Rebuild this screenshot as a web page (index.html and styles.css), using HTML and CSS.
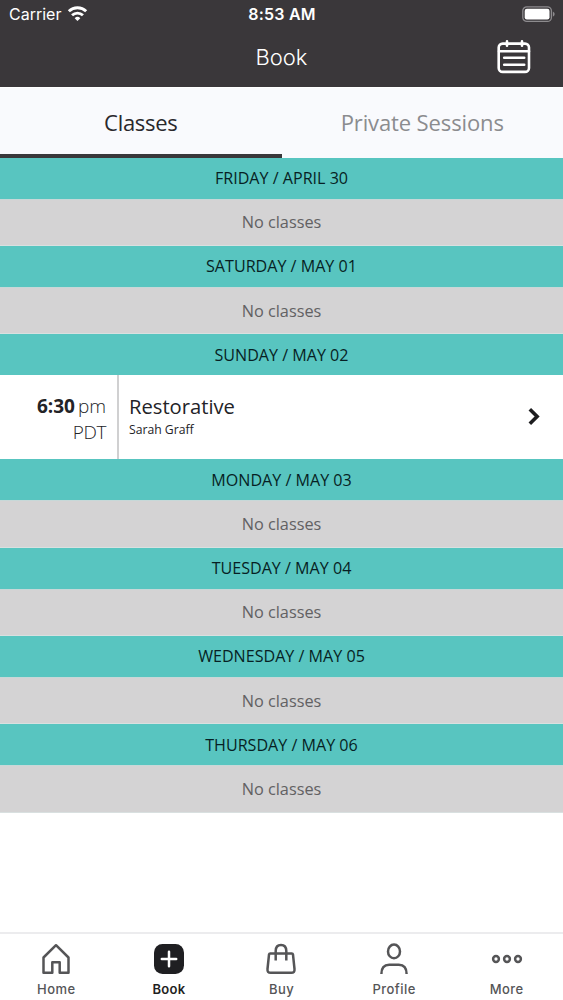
FILE: index.html
```html
<!DOCTYPE html>
<html lang="en">
<head>
<meta charset="utf-8">
<title>Book</title>
<link rel="stylesheet" href="styles.css">
</head>
<body>
<div class="app">
  <header class="top">
    <div class="status">
      <div class="carrier"><span>Carrier</span>
        <svg class="wifi" width="21" height="16" viewBox="0 0 22 17" fill="none" stroke="#fff" stroke-width="3.1"><path d="M1.8 5.6a13.4 13.4 0 0 1 18.4 0M5.2 9.8a8.6 8.6 0 0 1 11.6 0"/><path d="M11 16l-3-3.1a4.4 4.4 0 0 1 6 0z" fill="#fff" stroke="none"/></svg>
      </div>
      <div class="clock">8:53 AM</div>
      <svg class="battery" width="33" height="17" viewBox="0 0 33 17"><rect x=".8" y=".8" width="28.6" height="14.6" rx="4" fill="none" stroke="#8d8b8e" stroke-width="1.3"/><rect x="2.7" y="2.7" width="24.8" height="10.8" rx="2.2" fill="#fff"/><path d="M30.9 5.4q1.8 1 1.8 2.7t-1.8 2.7z" fill="#8d8b8e"/></svg>
    </div>
    <div class="nav">
      <h1 class="title">Book</h1>
      <svg class="calendar" width="34" height="34" viewBox="0 0 34 34" fill="none" stroke="#fff" stroke-width="2.6" stroke-linecap="round"><rect x="1.7" y="3.6" width="30.3" height="28.3" rx="4"/><path d="M2 11.3h30M10 1.4v4.4M25 1.4v4.4" /><path d="M7.2 17.8h20M7.2 24.8h20"/></svg>
    </div>
  </header>
  <nav class="tabs">
    <div class="tab active"><span>Classes</span></div>
    <div class="tab"><span>Private Sessions</span></div>
  </nav>
  <main class="schedule">
    <h2 class="day"><span>FRIDAY / APRIL 30</span></h2>
    <p class="empty"><span>No classes</span></p>
    <h2 class="day"><span>SATURDAY / MAY 01</span></h2>
    <p class="empty"><span>No classes</span></p>
    <h2 class="day"><span>SUNDAY / MAY 02</span></h2>
    <div class="session">
      <div class="time"><div><b>6:30</b><span class="meridiem">pm</span></div><div class="zone">PDT</div></div>
      <div class="info"><div class="name"><span>Restorative</span></div><div class="teacher"><span>Sarah Graff</span></div></div>
      <svg class="chevron" width="14" height="20" viewBox="0 0 14 20" fill="none" stroke="#1d1d1f" stroke-width="3.6"><path d="M1.8 2.3l7.3 7.2-7.3 7.2"/></svg>
    </div>
    <h2 class="day"><span>MONDAY / MAY 03</span></h2>
    <p class="empty"><span>No classes</span></p>
    <h2 class="day"><span>TUESDAY / MAY 04</span></h2>
    <p class="empty"><span>No classes</span></p>
    <h2 class="day"><span>WEDNESDAY / MAY 05</span></h2>
    <p class="empty"><span>No classes</span></p>
    <h2 class="day"><span>THURSDAY / MAY 06</span></h2>
    <p class="empty"><span>No classes</span></p>
  </main>
  <footer class="bar">
    <div class="item"><svg class="icon" viewBox="0 0 32 32"><path d="M16 2.2L3.5 14.5v15.3h8.8v-10.6h7.4v10.6h8.8V14.5z" stroke-linejoin="round"/></svg><span>Home</span></div>
    <div class="item current"><svg class="icon" viewBox="0 0 32 32"><rect x="1" y="1" width="30" height="30" rx="8.5" fill="#1f1f22" stroke="none"/><path d="M16 8.8v14.4M8.8 16h14.4" stroke="#fff" stroke-linecap="round"/></svg><span>Book</span></div>
    <div class="item"><svg class="icon" viewBox="0 0 32 32"><path d="M5.2 10.6h21.6q1 0 1.2 1L29.5 26q.4 3.8-3.2 3.8H5.7Q2.1 29.8 2.5 26L4 11.6q.2-1 1.2-1zM10.7 17.5V8q0-6 5.3-6t5.3 6v9.5"/></svg><span>Buy</span></div>
    <div class="item"><svg class="icon" viewBox="0 0 32 32"><ellipse cx="16" cy="8.4" rx="6" ry="6.8"/><path d="M3.4 31q0-9.3 7.8-9.3h9.6q7.8 0 7.8 9.3"/></svg><span>Profile</span></div>
    <div class="item"><svg class="icon" viewBox="0 0 32 32"><circle cx="5" cy="16" r="2.9"/><circle cx="16" cy="16" r="2.9"/><circle cx="27" cy="16" r="2.9"/></svg><span>More</span></div>
  </footer>
</div>
</body>
</html>
```
FILE: styles.css
```css
* { box-sizing: border-box; margin: 0; padding: 0; }
body { background: #fff; color: #232327; font-family: "Open Sans", "Noto Sans", sans-serif; }
.app { width: 563px; height: 1000px; display: flex; flex-direction: column; overflow: hidden; }
.top { height: 87px; background: #3a373a; color: #fff; font-family: Inter, sans-serif; flex: none; }
.status { height: 29px; padding: 0 8px 0 9px; display: grid; grid-template-columns: 1fr auto 1fr; align-items: center; }
.carrier { display: flex; align-items: center; gap: 6px; font-size: 16px; padding-bottom: 1px; }
.wifi { margin-top: -1px; }
.clock { font-size: 16px; font-weight: 600; letter-spacing: 0.2px; padding-bottom: 1px; }
.battery { justify-self: end; }
.nav { height: 56px; padding-right: 32px; display: grid; grid-template-columns: 1fr auto 1fr; align-items: center; }
.title { grid-column: 2; font-size: 22px; font-weight: 300; padding-left: 32px; }
.calendar { justify-self: end; }
.tabs { height: 70.7px; display: flex; background: #f9fafd; flex: none; border-top: 1px solid #fff; }
.tab { flex: 1; display: flex; align-items: center; justify-content: center; padding-top: 2px; border-bottom: 4px solid transparent; font-size: 22px; letter-spacing: -0.12px; color: #8b8c8f; }
.tab.active { color: #29282c; border-bottom-color: #39383a; letter-spacing: -0.3px; }
.schedule { flex: 1; }
.day { height: 41px; display: flex; align-items: center; justify-content: center; background: #58c5c0; color: #071f24; font-size: 16.1px; font-weight: 400; }
.empty { height: 47.3px; display: flex; align-items: center; justify-content: center; background: #d4d3d4; border-top: 1px solid #c7d8d8; border-bottom: 1px solid #d9e0e0; color: #626163; font-size: 16.3px; }
.session { height: 84.1px; display: flex; align-items: center; padding-right: 21px; }
.time { width: 119px; height: 100%; border-right: 2px solid #d0d0d1; padding: 18px 11px 0 0; text-align: right; font-size: 19px; line-height: 26px; font-weight: 300; }
.time b { font-weight: 700; }
.meridiem { margin-left: 3px; }
.zone { letter-spacing: -0.4px; }
.info { flex: 1; padding-left: 10px; }
.name { font-size: 20.2px; line-height: 26px; }
.teacher { font-size: 12.2px; line-height: 22px; }
.bar { height: 68px; flex: none; border-top: 2px solid #ececee; display: flex; font: 500 13px Inter, sans-serif; color: #555557; }
.item { flex: 1; display: flex; flex-direction: column; align-items: center; padding-top: 9px; gap: 6px; letter-spacing: 0.45px; }
.item.current { color: #1f1f22; font-weight: 600; letter-spacing: 0.3px; }
.icon { width: 32px; height: 32px; fill: none; stroke: #555557; stroke-width: 2.5; }
```
